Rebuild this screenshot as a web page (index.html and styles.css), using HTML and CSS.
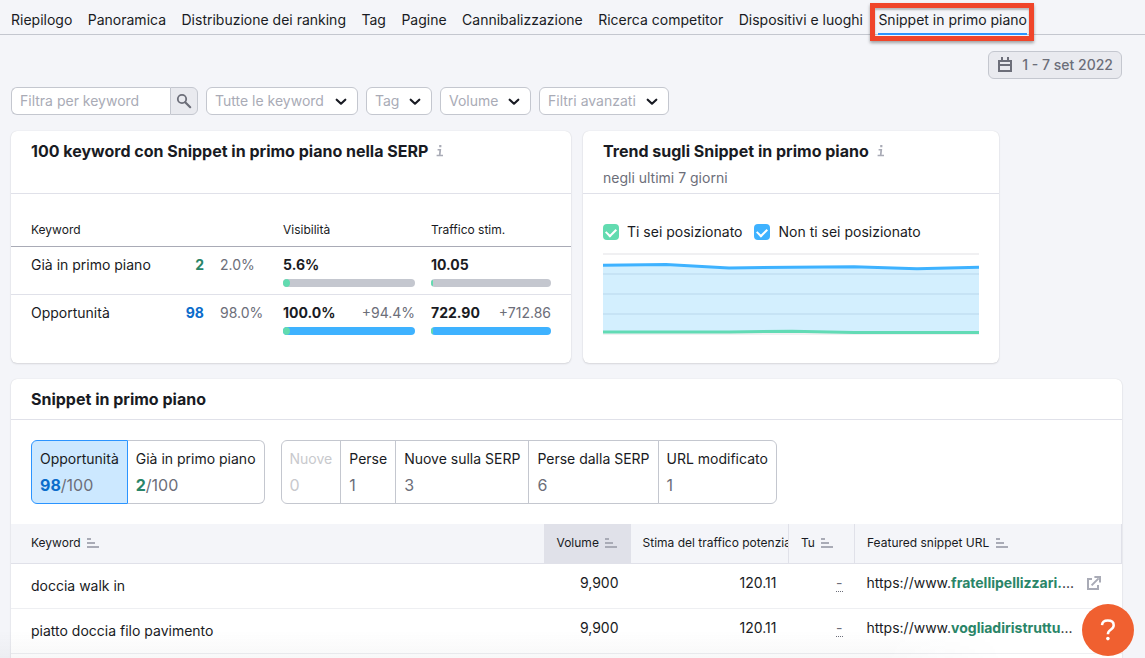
FILE: index.html
```html
<!DOCTYPE html>
<html lang="it">
<head>
<meta charset="utf-8">
<meta name="viewport" content="width=device-width, initial-scale=1">
<title>Snippet in primo piano</title>
<link rel="stylesheet" href="styles.css">
</head>
<body>
<svg class="defs" aria-hidden="true">
  <symbol id="chevron" viewBox="0 0 12 8"><path d="M1.7 1.7 6 5.7l4.3-4" fill="none" stroke="currentColor" stroke-width="2.2" stroke-linecap="round" stroke-linejoin="round"/></symbol>
  <symbol id="sort" viewBox="0 0 12 10"><path d="M0 0h4v2H0zM0 4h8v2H0zM0 8h12v2H0z" fill="currentColor"/></symbol>
  <symbol id="info" viewBox="0 0 8 12"><path d="M3.2 0h2.2v2.2H3.2zM1.6 4h3.6L4.6 9.8H7V11.2H.6V9.8H2.9L3.3 5.4H1.6z" fill="currentColor"/></symbol>
  <symbol id="external" viewBox="0 0 14 14"><path d="M5 2.9H1V13h10V9M4.6 9.4l7-7" fill="none" stroke="currentColor" stroke-width="2"/><path d="M7.4 0H14v6.6h-2V2H7.4z" fill="currentColor"/></symbol>
</svg>

<nav class="tabs" aria-label="Sezioni">
  <div class="tab-list">
    <a class="tab" href="#">Riepilogo</a>
    <a class="tab" href="#">Panoramica</a>
    <a class="tab" href="#">Distribuzione dei ranking</a>
    <a class="tab" href="#">Tag</a>
    <a class="tab" href="#">Pagine</a>
    <a class="tab" href="#">Cannibalizzazione</a>
    <a class="tab" href="#">Ricerca competitor</a>
    <a class="tab" href="#">Dispositivi e luoghi</a>
    <a class="tab tab-active" href="#" aria-current="page">Snippet in primo piano</a>
  </div>
</nav>

<main class="page">
  <div class="date-row">
    <button class="date-button" type="button">
      <svg width="14" height="16" viewBox="0 0 14 16" aria-hidden="true"><path d="M1 4h12v10H1zM1 8h12" fill="none" stroke="currentColor" stroke-width="2"/><path d="M3 0h2v4H3zM9 0h2v4H9z" fill="currentColor"/></svg>
      <span>1 - 7 set 2022</span>
    </button>
  </div>

  <form class="filters">
    <div class="search">
      <input class="search-input" type="text" placeholder="Filtra per keyword" aria-label="Filtra per keyword">
      <button class="search-button" type="button" aria-label="Cerca">
        <svg width="16" height="16" viewBox="0 0 16 16" aria-hidden="true"><circle cx="6" cy="6" r="4.2" fill="none" stroke="currentColor" stroke-width="1.8"/><path d="m9.2 9.2 5 5" stroke="currentColor" stroke-width="2.2" stroke-linecap="round"/></svg>
      </button>
    </div>
    <div class="select"><select class="select-keyword" aria-label="Keyword"><option>Tutte le keyword</option></select><svg class="chevron" aria-hidden="true"><use href="#chevron"/></svg></div>
    <div class="select"><select class="select-tag" aria-label="Tag"><option>Tag</option></select><svg class="chevron" aria-hidden="true"><use href="#chevron"/></svg></div>
    <div class="select"><select class="select-volume" aria-label="Volume"><option>Volume</option></select><svg class="chevron" aria-hidden="true"><use href="#chevron"/></svg></div>
    <div class="select"><select class="select-advanced" aria-label="Filtri avanzati"><option>Filtri avanzati</option></select><svg class="chevron" aria-hidden="true"><use href="#chevron"/></svg></div>
  </form>

  <div class="cards">
    <section class="card">
      <header class="card-head card-head-tall">
        <h2>100 keyword con Snippet in primo piano nella SERP <svg class="info" aria-hidden="true"><use href="#info"/></svg></h2>
      </header>
      <table class="summary">
        <colgroup><col class="sum-name"><col class="sum-count"><col class="sum-share"><col class="sum-vis"><col class="sum-traffic"></colgroup>
        <thead>
          <tr><th scope="col" colspan="3">Keyword</th><th scope="col">Visibilità</th><th scope="col">Traffico stim.</th></tr>
        </thead>
        <tbody>
          <tr>
            <td>Già in primo piano</td>
            <td class="count green">2</td>
            <td class="muted">2.0%</td>
            <td><div class="measure"><b>5.6%</b></div><div class="bar"><div class="bar-fill" style="width:5.6%"></div></div></td>
            <td><div class="measure"><b>10.05</b></div><div class="bar"><div class="bar-fill" style="width:1.4%"></div></div></td>
          </tr>
          <tr>
            <td>Opportunità</td>
            <td class="count blue">98</td>
            <td class="muted">98.0%</td>
            <td><div class="measure"><b>100.0%</b><span class="muted">+94.4%</span></div><div class="bar bar-blue"><div class="bar-fill" style="width:5.6%"></div></div></td>
            <td><div class="measure"><b>722.90</b><span class="muted">+712.86</span></div><div class="bar bar-blue"><div class="bar-fill" style="width:1.4%"></div></div></td>
          </tr>
        </tbody>
      </table>
    </section>

    <section class="card">
      <header class="card-head card-head-tall">
        <h2>Trend sugli Snippet in primo piano <svg class="info" aria-hidden="true"><use href="#info"/></svg></h2>
        <p>negli ultimi 7 giorni</p>
      </header>
      <div class="trend">
        <div class="legend">
          <label><input class="check check-green" type="checkbox" checked>Ti sei posizionato</label>
          <label><input class="check check-blue" type="checkbox" checked>Non ti sei posizionato</label>
        </div>
        <svg class="chart" viewBox="0 0 376 84" preserveAspectRatio="none" role="img" aria-label="Trend">
          <path d="M0 2h376M0 22h376M0 42h376M0 62h376M0 82h376" stroke="#f0f0f2" stroke-width="2"/>
          <path d="M0 13.2 63 12.6 126 16 189 15.2 251 14.8 314 16.8 376 15.2V80H0z" fill="#d3effe"/>
          <path d="M0 22h376M0 42h376M0 62h376" stroke="#c6e3f5" stroke-width="2"/>
          <path d="M0 13.2 63 12.6 126 16 189 15.2 251 14.8 314 16.8 376 15.2" fill="none" stroke="#3eb2ff" stroke-width="3"/>
          <path d="M0 80H126L189 79.2 251 80.4H376" fill="none" stroke="#62dbb5" stroke-width="3"/>
        </svg>
      </div>
    </section>
  </div>

  <section class="card">
    <header class="card-head"><h2>Snippet in primo piano</h2></header>
    <div class="groups">
      <div class="group">
        <button class="pill pill-active" type="button"><span>Opportunità</span><span class="pill-value"><b class="blue">98</b>/100</span></button>
        <button class="pill pill-plain" type="button"><span>Già in primo piano</span><span class="pill-value"><b class="green">2</b>/100</span></button>
      </div>
      <div class="group">
        <button class="pill" type="button" disabled><span>Nuove</span><span class="pill-value">0</span></button>
        <button class="pill" type="button"><span>Perse</span><span class="pill-value">1</span></button>
        <button class="pill" type="button"><span>Nuove sulla SERP</span><span class="pill-value">3</span></button>
        <button class="pill" type="button"><span>Perse dalla SERP</span><span class="pill-value">6</span></button>
        <button class="pill" type="button"><span>URL modificato</span><span class="pill-value">1</span></button>
      </div>
    </div>
    <table class="results">
      <colgroup><col class="col-keyword"><col class="col-volume"><col class="col-traffic"><col class="col-you"><col class="col-url"></colgroup>
      <thead>
        <tr>
          <th scope="col">Keyword <svg class="sort" aria-hidden="true"><use href="#sort"/></svg></th>
          <th scope="col" class="sorted">Volume <svg class="sort" aria-hidden="true"><use href="#sort"/></svg></th>
          <th scope="col" class="divided">Stima del traffico potenziale</th>
          <th scope="col" class="divided">Tu <svg class="sort" aria-hidden="true"><use href="#sort"/></svg></th>
          <th scope="col" class="divided">Featured snippet URL <svg class="sort" aria-hidden="true"><use href="#sort"/></svg></th>
        </tr>
      </thead>
      <tbody>
        <tr>
          <td class="keyword">doccia walk in</td><td class="number">9,900</td><td class="number">120.11</td><td class="number"><span class="dash">-</span></td>
          <td><div class="url"><span class="url-text">https://www.<b class="green">fratellipellizzari.</b>...</span><a class="external" href="#" aria-label="Apri URL"><svg width="14" height="14" aria-hidden="true"><use href="#external"/></svg></a></div></td>
        </tr>
        <tr>
          <td class="keyword">piatto doccia filo pavimento</td><td class="number">9,900</td><td class="number">120.11</td><td class="number"><span class="dash">-</span></td>
          <td><div class="url"><span class="url-text">https://www.<b class="green">vogliadiristruttu</b>...</span><a class="external" href="#" aria-label="Apri URL"><svg width="14" height="14" aria-hidden="true"><use href="#external"/></svg></a></div></td>
        </tr>
        <tr><td colspan="5"></td></tr>
      </tbody>
    </table>
  </section>
</main>

<div class="bottom-shade"></div>
<button class="help" type="button" aria-label="Aiuto">
  <svg width="16" height="22" viewBox="0 0 16 22" aria-hidden="true"><path d="M2 6.2C2.2 3.4 4.4 1.6 7.8 1.6c3.6 0 5.9 1.8 5.9 4.6 0 2-.9 3.1-3 4.5-2 1.3-2.8 2.1-2.8 4.5" fill="none" stroke="currentColor" stroke-width="2.5"/><circle cx="7.9" cy="19.6" r="1.8" fill="currentColor"/></svg>
</button>
</body>
</html>
```
FILE: styles.css
```css
* { box-sizing: border-box; }

body {
  margin: 0;
  height: 100vh;
  overflow: hidden;
  background: #f4f5f9;
  color: #191b23;
  font: 14px/20px Inter, "Liberation Sans", sans-serif;
}

button, input, select { font: inherit; color: inherit; margin: 0; }
h2, p { margin: 0; }
b { font-weight: 700; }
svg { flex: none; }

.defs { display: none; }
.green { color: #2a8568; }
.blue { color: #0b6ccb; }
.muted { color: #6c6e79; }

/* Navigation */
.tabs {
  height: 35px;
  padding: 10px 11px 0;
  border-bottom: 1px solid #c4c7cf;
}
.tab-list {
  display: flex;
  justify-content: space-between;
  max-width: 1016px;
  white-space: nowrap;
}
.tab { position: relative; height: 25px; color: inherit; text-decoration: none; }
.tab-active { border-bottom: 2px solid #2b94ff; }
.tab-active::after {
  content: "";
  position: absolute;
  inset: -7px -7px -8px -8px;
  border: 5px solid #f0452a;
  box-shadow: 0 2px 3px rgba(0, 0, 0, .35), inset 0 2px 2px rgba(0, 0, 0, .25);
}

.page { padding: 16px 23px 0 11px; }

.date-row { display: flex; justify-content: flex-end; }
.date-button {
  display: flex;
  align-items: center;
  gap: 10px;
  height: 28px;
  padding: 0 8px 0 9px;
  border: 1px solid #c4c7cf;
  border-radius: 6px;
  background: #e9eaef;
  color: #6c6e79;
  font-weight: 500;
}

/* Filters */
.filters { display: flex; gap: 8px; margin: 8px 0 16px; }
.search { display: flex; width: 187px; height: 28px; }
.search-input {
  flex: 1;
  min-width: 0;
  padding: 0 8px;
  border: 1px solid #c4c7cf;
  border-right: 0;
  border-radius: 6px 0 0 6px;
  background: #fff;
}
.search-input::placeholder { color: #a9abb6; opacity: 1; }
.search-button {
  display: flex;
  align-items: center;
  justify-content: center;
  width: 28px;
  padding: 0;
  border: 1px solid #c4c7cf;
  border-radius: 0 6px 6px 0;
  background: #e9eaef;
  color: #6c6e79;
}
.select { position: relative; }
.select select {
  display: block;
  width: 100%;
  height: 28px;
  padding: 0 8px;
  border: 1px solid #c4c7cf;
  border-radius: 6px;
  background: #fff;
  color: #a9abb6;
  appearance: none;
}
.select .select-keyword { width: 152px; }
.select .select-tag { width: 66px; }
.select .select-volume { width: 91px; }
.select .select-advanced { width: 130px; }
.chevron {
  position: absolute;
  right: 11px;
  top: 11px;
  width: 12px;
  height: 8px;
  pointer-events: none;
}

/* Cards */
.cards {
  display: grid;
  grid-template-columns: 560fr 416fr 111fr;
  gap: 12px;
  margin-bottom: 16px;
}
.card {
  min-width: 0;
  overflow: hidden;
  border-radius: 6px;
  background: #fff;
  box-shadow: 0 0 1px rgba(25, 27, 35, .16), 0 1px 2px rgba(25, 27, 35, .12);
}
.card-head { padding: 8px 20px; border-bottom: 1px solid #e0e1e9; }
.card-head h2 { font-size: 16px; line-height: 24px; font-weight: 700; }
.card-head p { margin-top: 5px; color: #6c6e79; }
.card-head-tall { height: 63px; }
.info { width: 8px; height: 12px; margin-left: 4px; color: #a9abb6; }

/* Summary table */
.summary { width: 100%; border-collapse: collapse; table-layout: fixed; margin-bottom: 16px; }
.sum-name { width: 153px; }
.sum-count { width: 48px; }
.sum-share { width: 63px; }
.sum-vis { width: 148px; }
.summary th {
  padding: 28px 8px 8px;
  border-bottom: 1px solid #a9abb6;
  font-size: 12px;
  line-height: 16px;
  font-weight: 400;
  text-align: left;
}
.summary td { height: 48px; padding: 8px 8px 0; vertical-align: top; white-space: nowrap; }
.summary th:first-child, .summary td:first-child { padding-left: 20px; }
.summary th:last-child, .summary td:last-child { padding-right: 20px; }
.summary tbody tr + tr td { border-top: 1px solid #e0e1e9; }
.summary .count { font-weight: 700; text-align: right; }
.measure { display: flex; justify-content: space-between; margin-bottom: 4px; }
.bar { height: 8px; overflow: hidden; border-radius: 4px; background: #c4c7cf; }
.bar-blue { background: #3eb2ff; }
.bar-fill { height: 100%; border-radius: 0 4px 4px 0; background: #62dbb0; }

/* Trend */
.trend { padding: 28px 20px 27px; }
.legend { display: flex; gap: 12px; margin-bottom: 10px; }
.legend label { display: flex; align-items: center; gap: 8px; white-space: nowrap; }
.check {
  display: grid;
  place-items: center;
  width: 16px;
  height: 16px;
  border-radius: 4px;
  appearance: none;
}
.check::before {
  content: "";
  width: 8px;
  height: 5px;
  margin-bottom: 2px;
  border: solid #fff;
  border-width: 0 0 2px 2px;
  transform: rotate(-45deg);
}
.check-green { background: #62dbb0; }
.check-blue { background: #3eb2ff; }
.chart { display: block; width: 100%; height: 84px; }

/* Quick filters */
.groups { display: flex; gap: 16px; padding: 20px; }
.group { display: flex; }
.pill {
  display: flex;
  flex-direction: column;
  gap: 4px;
  height: 64px;
  margin-left: -1px;
  padding: 8px;
  border: 1px solid #c4c7cf;
  background: #fff;
  text-align: left;
  white-space: nowrap;
}
.pill:first-child { margin-left: 0; border-radius: 6px 0 0 6px; }
.pill:last-child { border-radius: 0 6px 6px 0; }
.pill-active { border-color: #2b94ff; background: #cce8ff; }
.pill-plain { margin-left: 0; border-left: 0; }
.pill-value { color: #6c6e79; font-size: 16px; line-height: 24px; }
.pill:disabled, .pill:disabled .pill-value { color: #c8c9cd; }

/* Results */
.results { width: 100%; border-collapse: collapse; table-layout: fixed; }
.col-volume { width: 87px; }
.col-traffic { width: 158px; }
.col-you { width: 66px; }
.col-url { width: 267px; }
.results th {
  height: 39px;
  padding: 0 0 0 12px;
  overflow: hidden;
  border-bottom: 1px solid #e0e1e9;
  background: #f4f5f9;
  font-size: 12px;
  line-height: 16px;
  font-weight: 400;
  text-align: left;
  white-space: nowrap;
}
.results th.sorted { padding-left: 13px; background: #e0e1e9; }
.results th.divided { border-right: 1px solid #e0e1e9; }
.results td { height: 45px; padding: 9px 12px; border-bottom: 1px solid #eeeff2; vertical-align: top; }
.results th:first-child, .results td:first-child { padding-left: 20px; }
.results .keyword { padding-top: 12px; }
.results .number { text-align: right; }
.sort { width: 12px; height: 10px; margin-left: 3px; color: #a9abb6; vertical-align: -1px; }
.dash { display: inline-block; border-bottom: 1px dotted #6c6e79; line-height: 17px; color: #6c6e79; }
.url { display: flex; align-items: center; justify-content: space-between; padding-right: 9px; }
.url-text { white-space: nowrap; }
.external { display: flex; color: #a9abb6; }

.bottom-shade {
  position: fixed;
  left: 0;
  right: 140px;
  bottom: 0;
  height: 28px;
  background: linear-gradient(rgba(25, 27, 35, 0), rgba(25, 27, 35, .03));
  mask-image: linear-gradient(to left, transparent, #000 120px);
  pointer-events: none;
}
.help {
  position: fixed;
  right: 11px;
  bottom: 2px;
  display: flex;
  align-items: center;
  justify-content: center;
  width: 52px;
  height: 52px;
  padding: 0;
  border: 0;
  border-radius: 50%;
  background: #f06030;
  color: #fff;
}
```
